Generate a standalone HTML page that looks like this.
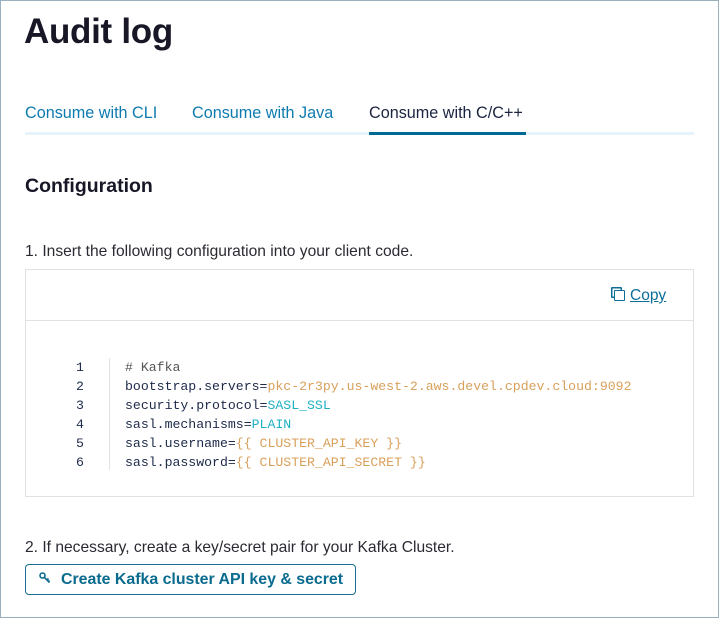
<!DOCTYPE html>
<html><head><style>
body{margin:0;width:719px;height:618px;background:#fff;font-family:"Liberation Sans",sans-serif;position:relative;overflow:hidden}
.frame{position:absolute;left:0;top:0;width:717px;height:616px;border:1px solid #9bb0bf}
.a{position:absolute;white-space:nowrap}
.code{font-family:"Liberation Mono",monospace;font-size:13.2px;line-height:19px;color:#1d2a4a}
.o{color:#d9a05c}.c{color:#1fb0c4}
</style></head><body>
<div class="frame"></div>
<div class="a" style="left:24px;top:12px;font-size:35px;font-weight:bold;color:#171726;letter-spacing:-0.3px">Audit log</div>
<div class="a" style="left:25px;top:104px;font-size:16.2px;color:#0e7bb0">Consume with CLI</div>
<div class="a" style="left:192px;top:104px;font-size:16.2px;color:#0e7bb0">Consume with Java</div>
<div class="a" style="left:369px;top:104px;font-size:16.2px;color:#1b2440">Consume with C/C++</div>
<div class="a" style="left:25px;top:132px;width:669px;height:3px;background:#e6f3fa"></div>
<div class="a" style="left:369px;top:132px;width:157px;height:3px;background:#006a94"></div>
<div class="a" style="left:25px;top:175px;font-size:19.5px;font-weight:bold;color:#171726">Configuration</div>
<div class="a" style="left:25px;top:243px;font-size:15.6px;color:#2a2a33">1. Insert the following configuration into your client code.</div>
<div class="a" style="left:25px;top:269px;width:667px;height:226px;border:1px solid #e2e2e6"></div>
<div class="a" style="left:26px;top:320px;width:667px;height:1px;background:#e2e2e6"></div>
<div class="a" style="left:614px;top:287px;font-size:15.5px;color:#0e6e9a;text-decoration:underline"><span style="display:inline-block;width:9px;height:9px;border:1.5px solid #0e6e9a;border-radius:1px;margin-right:5px;position:relative;top:1px;box-shadow:-3px -3px 0 -1.5px #fff,-3px -3px 0 0 #0e6e9a"></span>Copy</div>
<div class="a" style="left:109px;top:358px;width:1px;height:112px;background:#e2e2e6"></div>
<div class="a code" style="left:76px;top:358px;text-align:right">1<br>2<br>3<br>4<br>5<br>6</div>
<div class="a code" style="left:125px;top:358px"><span style="color:#555">#&nbsp;Kafka</span><br>bootstrap.servers=<span class="o">pkc-2r3py.us-west-2.aws.devel.cpdev.cloud:9092</span><br>security.protocol=<span class="c">SASL_SSL</span><br>sasl.mechanisms=<span class="c">PLAIN</span><br>sasl.username=<span class="o">{{ CLUSTER_API_KEY }}</span><br>sasl.password=<span class="o">{{ CLUSTER_API_SECRET }}</span></div>
<div class="a" style="left:25px;top:539px;font-size:15.6px;color:#2a2a33">2. If necessary, create a key/secret pair for your Kafka Cluster.</div>
<div class="a" style="left:25px;top:564px;width:329px;height:29px;border:1px solid #1a6d8f;border-radius:4px"></div>
<svg class="a" style="left:39px;top:572px" width="12" height="12" viewBox="0 0 12 12" fill="none" stroke="#0a6b8e" stroke-width="1.6"><circle cx="3.5" cy="3.5" r="2.5"/><path d="M5.3 5.3L10.5 10.5M8 8l1.5-1.5M9.5 9.5l1-1"/></svg>
<div class="a" style="left:61px;top:571px;font-size:15.9px;font-weight:bold;color:#0a6b8e">Create Kafka cluster API key &amp; secret</div>
</body></html>
